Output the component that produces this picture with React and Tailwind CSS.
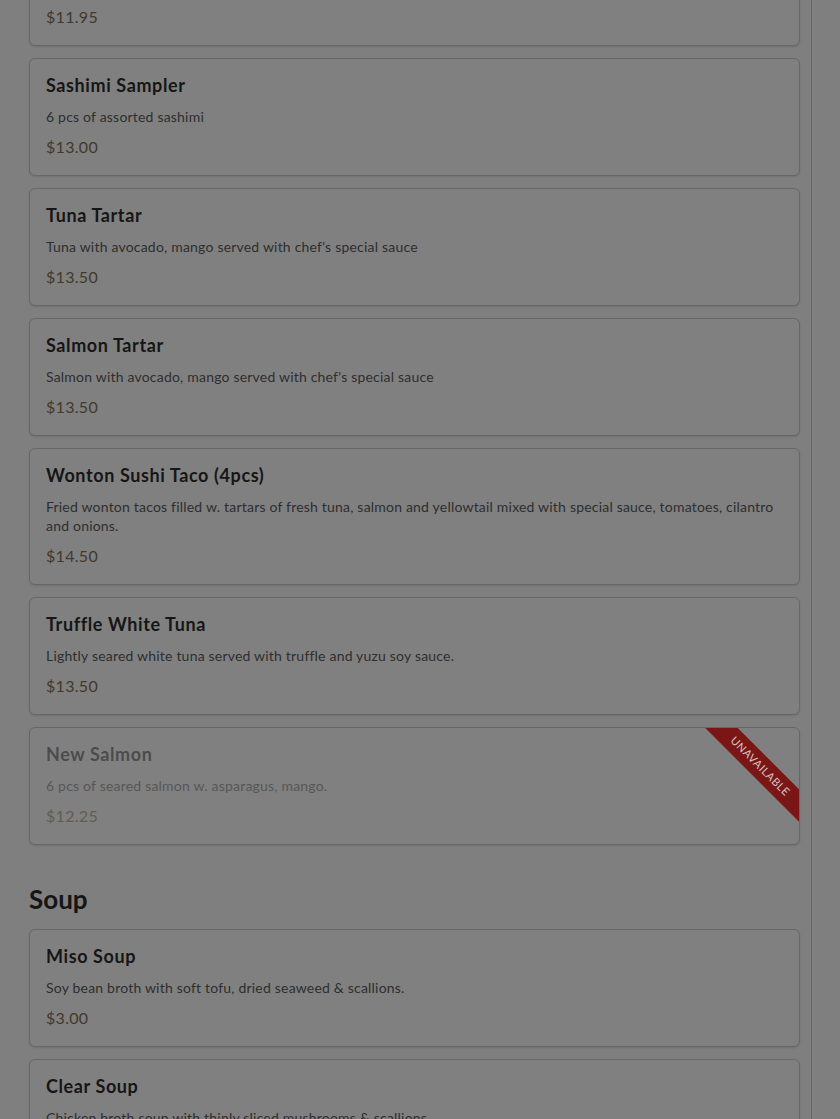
import React from 'react';

const sushi = [
  { name: 'Salmon Sampler', desc: '6 pcs of assorted salmon', price: '$11.95' },
  { name: 'Sashimi Sampler', desc: '6 pcs of assorted sashimi', price: '$13.00' },
  { name: 'Tuna Tartar', desc: "Tuna with avocado, mango served with chef's special sauce", price: '$13.50' },
  { name: 'Salmon Tartar', desc: "Salmon with avocado, mango served with chef's special sauce", price: '$13.50' },
  {
    name: 'Wonton Sushi Taco (4pcs)',
    desc: 'Fried wonton tacos filled w. tartars of fresh tuna, salmon and yellowtail mixed with special sauce, tomatoes, cilantro and onions.',
    price: '$14.50',
  },
  { name: 'Truffle White Tuna', desc: 'Lightly seared white tuna served with truffle and yuzu soy sauce.', price: '$13.50' },
  { name: 'New Salmon', desc: '6 pcs of seared salmon w. asparagus, mango.', price: '$12.25', unavailable: true },
];

const soup = [
  { name: 'Miso Soup', desc: 'Soy bean broth with soft tofu, dried seaweed & scallions.', price: '$3.00' },
  { name: 'Clear Soup', desc: 'Chicken broth soup with thinly sliced mushrooms & scallions.', price: '$3.00' },
];

const MenuCard = ({ item }) => (
  <div className="relative overflow-hidden rounded-[6px] border border-[#676767] bg-[#808080] p-4 shadow-[0_1px_2px_rgba(0,0,0,0.12)]">
    <div className={item.unavailable ? 'opacity-50' : ''}>
      <h3 className="text-[18px] leading-[20px] font-bold tracking-[0.6px] text-[#161616]">{item.name}</h3>
      <p className="mt-[12px] text-[14px] leading-[19px] tracking-[0.2px] text-[#2e2e2e]">{item.desc}</p>
      <p className="mt-[9px] text-[16px] leading-[24px] tracking-[0.3px] text-[#42392b]">{item.price}</p>
    </div>
    {item.unavailable && (
      <div className="absolute right-[-36px] top-[27px] flex h-[23px] w-[150px] rotate-45 items-center justify-center bg-[#7b1616] text-[11px] tracking-[0.5px] text-[#d4c4c4]">
        UNAVAILABLE
      </div>
    )}
  </div>
);

export default function App() {
  return (
    <div
      className="flex h-[1119px] w-full overflow-hidden bg-[#7f7f7f]"
      style={{ fontFamily: 'Lato, "Open Sans", sans-serif' }}
    >
      <div className="w-[812px] shrink-0 border-r border-[#676767] pl-[29px] pr-[11px]">
        <div className="mt-[-72px] flex flex-col gap-3">
          {sushi.map((item) => (
            <MenuCard key={item.name} item={item} />
          ))}
        </div>
        <h2 className="mt-[38px] mb-[14px] text-[26px] leading-[32px] font-bold text-[#151515]">Soup</h2>
        <div className="flex flex-col gap-3">
          {soup.map((item) => (
            <MenuCard key={item.name} item={item} />
          ))}
        </div>
      </div>
      <div className="flex-1" />
    </div>
  );
}
